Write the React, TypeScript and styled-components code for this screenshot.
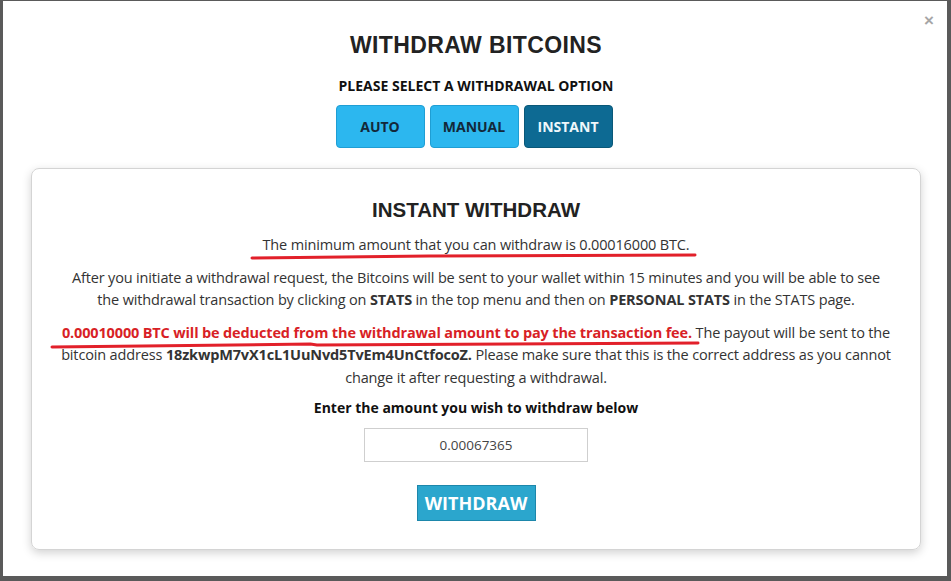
import React from 'react'
import styled, { createGlobalStyle } from 'styled-components'

const GlobalStyle = createGlobalStyle`
	html, body {
		margin: 0;
		padding: 0;
		background: #fff;
	}
	* {
		box-sizing: border-box;
	}
`

const Frame = styled.div`
	position: relative;
	width: 951px;
	height: 581px;
	border-style: solid;
	border-color: #5a5a5a;
	border-width: 1px 4px 5px 3px;
	background: #fff;
	padding: 27px 26px 0 28px;
	font-family: 'Open Sans', 'Liberation Sans', sans-serif;
	color: #333;
`

const Close = styled.span`
	position: absolute;
	top: 11px;
	right: 13px;
	font-family: 'Liberation Sans', Arial, sans-serif;
	font-size: 17px;
	font-weight: bold;
	color: #a6a6a6;
	line-height: 1;
`

const Title = styled.h1`
	margin: 4px 0 0;
	text-align: center;
	font-family: 'Liberation Sans', Arial, sans-serif;
	font-size: 23px;
	font-weight: bold;
	letter-spacing: 0.4px;
	color: #222;
	line-height: 26px;
`

const Subtitle = styled.h4`
	margin: 19px 0 0;
	text-align: center;
	font-size: 14px;
	font-weight: bold;
	color: #111;
	line-height: 18px;
`

const Options = styled.div`
	display: flex;
	justify-content: center;
	gap: 5px;
	margin-top: 10px;
	padding-right: 4px;
`

const OptionButton = styled.button<{ $active?: boolean }>`
	width: 89px;
	height: 43px;
	border-radius: 4px;
	border: 1px solid ${p => (p.$active ? '#0a5878' : '#1f9ed4')};
	background: ${p => (p.$active ? '#0d6a93' : '#2cb7ef')};
	color: ${p => (p.$active ? '#eef7fb' : '#13283a')};
	font-family: 'Open Sans', 'Liberation Sans', sans-serif;
	font-size: 14px;
	font-weight: bold;
	padding: 0;
`

const Card = styled.div`
	margin-top: 20px;
	height: 382px;
	border: 1px solid #d4d4d4;
	border-radius: 8px;
	box-shadow: 0 3px 10px rgba(0, 0, 0, 0.18);
	padding: 29px 29px 0;
	text-align: center;
`

const CardTitle = styled.h2`
	margin: 0;
	font-family: 'Liberation Sans', Arial, sans-serif;
	font-size: 20.5px;
	font-weight: bold;
	color: #222;
	line-height: 24px;
`

const Para = styled.p<{ $first?: boolean }>`
	margin: ${p => (p.$first ? '12px' : '10px')} 0 0;
	font-size: 14.5px;
	line-height: 22.5px;
	letter-spacing: -0.15px;
	color: #333;
`

const Marked = styled.span`
	position: relative;
`

const Red = styled.b`
	color: #d81f26;
`

const Scribble = styled.svg`
	position: absolute;
	left: -10px;
	bottom: -6px;
	width: calc(100% + 16px);
	height: 8px;
	overflow: visible;
	pointer-events: none;
`

const Label = styled.div`
	margin-top: 9px;
	font-size: 14px;
	font-weight: bold;
	color: #111;
	line-height: 20px;
`

const AmountInput = styled.input`
	display: block;
	margin: 10px auto 0;
	width: 224px;
	height: 34px;
	border: 1px solid #cfcfcf;
	text-align: center;
	font-family: 'Open Sans', 'Liberation Sans', sans-serif;
	font-size: 13.5px;
	color: #444;
	outline: none;
`

const WithdrawButton = styled.button`
	display: block;
	margin: 23px auto 0;
	width: 119px;
	height: 36px;
	background: #2ba6cd;
	border: 1px solid #1d87ab;
	color: #fff;
	font-family: 'Open Sans', 'Liberation Sans', sans-serif;
	font-size: 18px;
	font-weight: bold;
	padding: 0;
`

const Underline = ({ wobble = 0 }: { wobble?: number }) => (
	<Scribble viewBox="0 0 100 8" preserveAspectRatio="none">
		<path
			d={`M0 ${5 + wobble} L40 4 L41 ${3 + wobble} L100 3`}
			stroke="#e2202a"
			strokeWidth="3"
			fill="none"
			vectorEffect="non-scaling-stroke"
			strokeLinecap="round"
		/>
	</Scribble>
)

export default function App() {
	return (
		<>
			<GlobalStyle />
			<Frame>
				<Close>×</Close>
				<Title>WITHDRAW BITCOINS</Title>
				<Subtitle>PLEASE SELECT A WITHDRAWAL OPTION</Subtitle>
				<Options>
					<OptionButton>AUTO</OptionButton>
					<OptionButton>MANUAL</OptionButton>
					<OptionButton $active>INSTANT</OptionButton>
				</Options>

				<Card>
					<CardTitle>INSTANT WITHDRAW</CardTitle>
					<Para $first>
						<Marked>
							The minimum amount that you can withdraw is 0.00016000 BTC.
							<Underline wobble={1} />
						</Marked>
					</Para>
					<Para>
						After you initiate a withdrawal request, the Bitcoins will be sent to your wallet within 15 minutes and you will
						be able to see the withdrawal transaction by clicking on <b>STATS</b> in the top menu and then on{' '}
						<b>PERSONAL STATS</b> in the STATS page.
					</Para>
					<Para>
						<Marked>
							<Red>0.00010000 BTC will be deducted from the withdrawal amount to pay the transaction fee.</Red>
							<Underline wobble={2} />
						</Marked>{' '}
						The payout will be sent to the bitcoin address <b>18zkwpM7vX1cL1UuNvd5TvEm4UnCtfocoZ.</b> Please make sure
						that this is the correct address as you cannot change it after requesting a withdrawal.
					</Para>
					<Label>Enter the amount you wish to withdraw below</Label>
					<AmountInput defaultValue="0.00067365" />
					<WithdrawButton>WITHDRAW</WithdrawButton>
				</Card>
			</Frame>
		</>
	)
}
